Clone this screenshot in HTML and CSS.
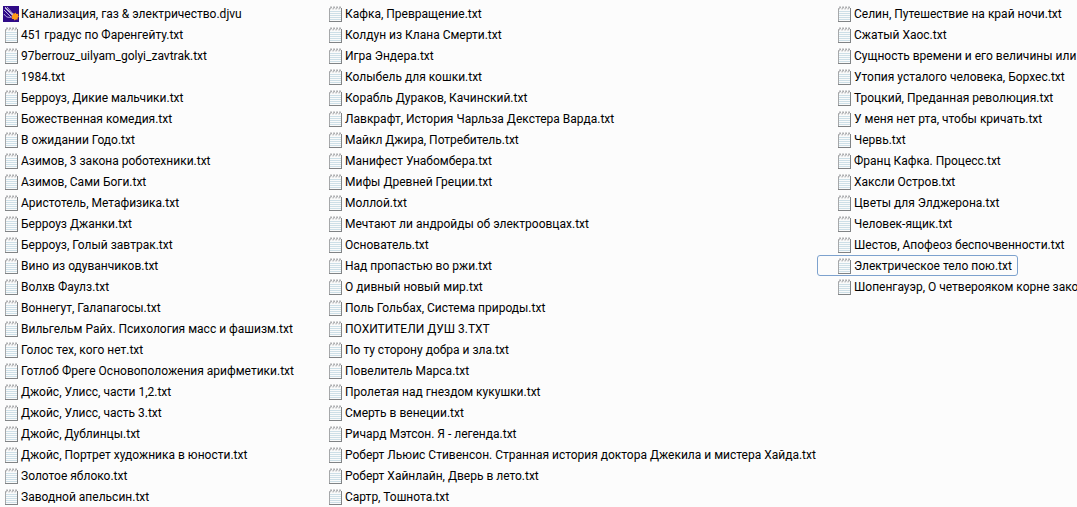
FILE: index.html
```html
<!DOCTYPE html>
<html lang="ru">
<head>
<meta charset="utf-8">
<title>Книги</title>
<link rel="stylesheet" href="styles.css">
</head>
<body>
<svg class="defs" aria-hidden="true">
  <symbol id="txt" viewBox="0 0 16 16">
    <path d="M1.500 2.500h12v13h-12z" fill="#fafbfb" stroke="#a6a8aa"/>
    <path d="M13.500 2v14M1 15.500h13" stroke="#808385" fill="none"/>
    <path d="M2 5.500h11M2 7.500h11M2 9.500h11M2 11.500h11M2 13.500h11" stroke="#cddfe7" fill="none"/>
    <path d="M2 2.500h11" stroke="#fdfdfd" fill="none"/>
    <path d="M2 3.500l1-3 1 2M5 3.500l1-3 1 2M8 3.500l1-3 1 2M11 3.500l1-3 1 2" stroke="#999b9d" stroke-width=".8" fill="none"/>
  </symbol>
  <symbol id="djvu" viewBox="0 0 16 16">
    <path d="M0 0h16v16H0z" fill="#2f0a87"/>
    <path d="M2 2l8 8M1 4l7 7M4 1l6 7M1 8c2 3 4 4 8 3" stroke="#c9bfe8" stroke-width=".9" fill="none"/>
    <path d="M2 1l8 8" stroke="#fff" stroke-width=".7" fill="none"/>
    <path d="M12.500 6.500l1 1.600 1.900-.3-.3 1.800 1 1.200-1.500 1 .1 1.800-1.900-.2-1.200 1.200-1-1.600-1.900-.1.500-1.700-.8-1.400 1.600-.8.100-1.800 1.700.4z" fill="#ff9c18"/>
  </symbol>
</svg>
<ul class="files">
  <li class="file first"><svg class="icon"><use href="#djvu"/></svg><span>Канализация, газ &amp; электричество.djvu</span></li>
  <li class="file"><svg class="icon"><use href="#txt"/></svg><span>451 градус по Фаренгейту.txt</span></li>
  <li class="file"><svg class="icon"><use href="#txt"/></svg><span>97berrouz_uilyam_golyi_zavtrak.txt</span></li>
  <li class="file"><svg class="icon"><use href="#txt"/></svg><span>1984.txt</span></li>
  <li class="file"><svg class="icon"><use href="#txt"/></svg><span>Берроуз, Дикие мальчики.txt</span></li>
  <li class="file"><svg class="icon"><use href="#txt"/></svg><span>Божественная комедия.txt</span></li>
  <li class="file"><svg class="icon"><use href="#txt"/></svg><span>В ожидании Годо.txt</span></li>
  <li class="file"><svg class="icon"><use href="#txt"/></svg><span>Азимов, 3 закона роботехники.txt</span></li>
  <li class="file"><svg class="icon"><use href="#txt"/></svg><span>Азимов, Сами Боги.txt</span></li>
  <li class="file"><svg class="icon"><use href="#txt"/></svg><span>Аристотель, Метафизика.txt</span></li>
  <li class="file"><svg class="icon"><use href="#txt"/></svg><span>Берроуз Джанки.txt</span></li>
  <li class="file"><svg class="icon"><use href="#txt"/></svg><span>Берроуз, Голый завтрак.txt</span></li>
  <li class="file"><svg class="icon"><use href="#txt"/></svg><span>Вино из одуванчиков.txt</span></li>
  <li class="file"><svg class="icon"><use href="#txt"/></svg><span>Волхв Фаулз.txt</span></li>
  <li class="file"><svg class="icon"><use href="#txt"/></svg><span>Воннегут, Галапагосы.txt</span></li>
  <li class="file"><svg class="icon"><use href="#txt"/></svg><span>Вильгельм Райх. Психология масс и фашизм.txt</span></li>
  <li class="file"><svg class="icon"><use href="#txt"/></svg><span>Голос тех, кого нет.txt</span></li>
  <li class="file"><svg class="icon"><use href="#txt"/></svg><span>Готлоб Фреге Основоположения арифметики.txt</span></li>
  <li class="file"><svg class="icon"><use href="#txt"/></svg><span>Джойс, Улисс, части 1,2.txt</span></li>
  <li class="file"><svg class="icon"><use href="#txt"/></svg><span>Джойс, Улисс, часть 3.txt</span></li>
  <li class="file"><svg class="icon"><use href="#txt"/></svg><span>Джойс, Дублинцы.txt</span></li>
  <li class="file"><svg class="icon"><use href="#txt"/></svg><span>Джойс, Портрет художника в юности.txt</span></li>
  <li class="file"><svg class="icon"><use href="#txt"/></svg><span>Золотое яблоко.txt</span></li>
  <li class="file"><svg class="icon"><use href="#txt"/></svg><span>Заводной апельсин.txt</span></li>
  <li class="file"><svg class="icon"><use href="#txt"/></svg><span>Кафка, Превращение.txt</span></li>
  <li class="file"><svg class="icon"><use href="#txt"/></svg><span>Колдун из Клана Смерти.txt</span></li>
  <li class="file"><svg class="icon"><use href="#txt"/></svg><span>Игра Эндера.txt</span></li>
  <li class="file"><svg class="icon"><use href="#txt"/></svg><span>Колыбель для кошки.txt</span></li>
  <li class="file"><svg class="icon"><use href="#txt"/></svg><span>Корабль Дураков, Качинский.txt</span></li>
  <li class="file"><svg class="icon"><use href="#txt"/></svg><span>Лавкрафт, История Чарльза Декстера Варда.txt</span></li>
  <li class="file"><svg class="icon"><use href="#txt"/></svg><span>Майкл Джира, Потребитель.txt</span></li>
  <li class="file"><svg class="icon"><use href="#txt"/></svg><span>Манифест Унабомбера.txt</span></li>
  <li class="file"><svg class="icon"><use href="#txt"/></svg><span>Мифы Древней Греции.txt</span></li>
  <li class="file"><svg class="icon"><use href="#txt"/></svg><span>Моллой.txt</span></li>
  <li class="file"><svg class="icon"><use href="#txt"/></svg><span>Мечтают ли андройды об электроовцах.txt</span></li>
  <li class="file"><svg class="icon"><use href="#txt"/></svg><span>Основатель.txt</span></li>
  <li class="file"><svg class="icon"><use href="#txt"/></svg><span>Над пропастью во ржи.txt</span></li>
  <li class="file"><svg class="icon"><use href="#txt"/></svg><span>О дивный новый мир.txt</span></li>
  <li class="file"><svg class="icon"><use href="#txt"/></svg><span>Поль Гольбах, Система природы.txt</span></li>
  <li class="file"><svg class="icon"><use href="#txt"/></svg><span>ПОХИТИТЕЛИ ДУШ 3.TXT</span></li>
  <li class="file"><svg class="icon"><use href="#txt"/></svg><span>По ту сторону добра и зла.txt</span></li>
  <li class="file"><svg class="icon"><use href="#txt"/></svg><span>Повелитель Марса.txt</span></li>
  <li class="file"><svg class="icon"><use href="#txt"/></svg><span>Пролетая над гнездом кукушки.txt</span></li>
  <li class="file"><svg class="icon"><use href="#txt"/></svg><span>Смерть в венеции.txt</span></li>
  <li class="file"><svg class="icon"><use href="#txt"/></svg><span>Ричард Мэтсон. Я - легенда.txt</span></li>
  <li class="file"><svg class="icon"><use href="#txt"/></svg><span>Роберт Льюис Стивенсон. Странная история доктора Джекила и мистера Хайда.txt</span></li>
  <li class="file"><svg class="icon"><use href="#txt"/></svg><span>Роберт Хайнлайн, Дверь в лето.txt</span></li>
  <li class="file"><svg class="icon"><use href="#txt"/></svg><span>Сартр, Тошнота.txt</span></li>
  <li class="file"><svg class="icon"><use href="#txt"/></svg><span>Селин, Путешествие на край ночи.txt</span></li>
  <li class="file"><svg class="icon"><use href="#txt"/></svg><span>Сжатый Хаос.txt</span></li>
  <li class="file"><svg class="icon"><use href="#txt"/></svg><span>Сущность времени и его величины или</span></li>
  <li class="file"><svg class="icon"><use href="#txt"/></svg><span>Утопия усталого человека, Борхес.txt</span></li>
  <li class="file"><svg class="icon"><use href="#txt"/></svg><span>Троцкий, Преданная революция.txt</span></li>
  <li class="file"><svg class="icon"><use href="#txt"/></svg><span>У меня нет рта, чтобы кричать.txt</span></li>
  <li class="file"><svg class="icon"><use href="#txt"/></svg><span>Червь.txt</span></li>
  <li class="file"><svg class="icon"><use href="#txt"/></svg><span>Франц Кафка. Процесс.txt</span></li>
  <li class="file"><svg class="icon"><use href="#txt"/></svg><span>Хаксли Остров.txt</span></li>
  <li class="file"><svg class="icon"><use href="#txt"/></svg><span>Цветы для Элджерона.txt</span></li>
  <li class="file"><svg class="icon"><use href="#txt"/></svg><span>Человек-ящик.txt</span></li>
  <li class="file"><svg class="icon"><use href="#txt"/></svg><span>Шестов, Апофеоз беспочвенности.txt</span></li>
  <li class="file focused"><svg class="icon"><use href="#txt"/></svg><span>Электрическое тело пою.txt</span></li>
  <li class="file"><svg class="icon"><use href="#txt"/></svg><span>Шопенгауэр, О четверояком корне зако</span></li>
</ul>
</body>
</html>
```
FILE: styles.css
```css
body {
  margin: 0;
  background: #fcfcfc;
  color: #000;
  font-family: Roboto, "Open Sans", sans-serif;
  font-size: 12px;
  overflow: hidden;
}

.defs {
  display: none;
}

.files {
  display: grid;
  grid-auto-flow: column;
  grid-template-rows: repeat(24, 21px);
  grid-template-columns: 324px 509px 1fr;
  margin: 0;
  padding: 3px 0 0;
  list-style: none;
}

.file {
  display: flex;
  align-items: center;
  justify-self: start;
  box-sizing: border-box;
  gap: 1px;
  padding-left: 4px;
  line-height: 20px;
  white-space: nowrap;
}

.first {
  padding-left: 3px;
  gap: 2px;
}

.icon {
  flex: none;
  width: 16px;
  height: 16px;
}

.focused {
  margin-left: -16px;
  padding: 0 5px 0 19px;
  border: 1px solid #7da2ce;
  border-radius: 3px;
}
```
